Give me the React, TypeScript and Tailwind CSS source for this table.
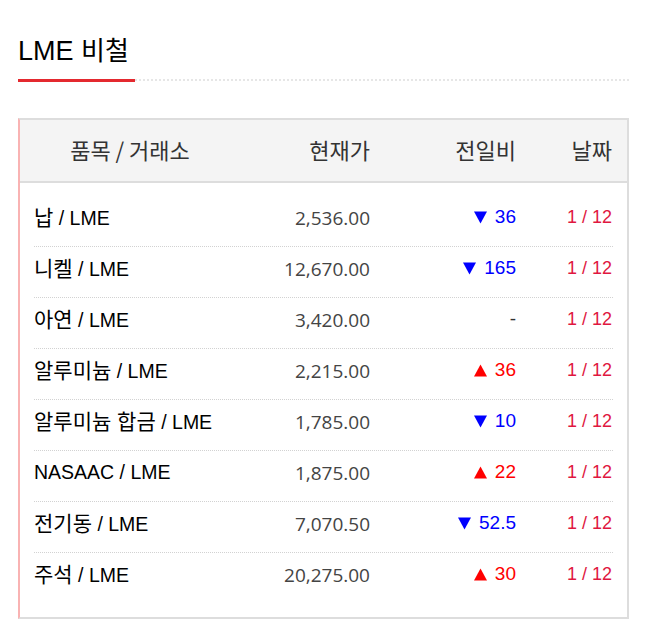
const rows = [
  { item: '납', market: 'LME', price: '2,536.00', dir: 'down', diff: '36', date: '1 / 12' },
  { item: '니켈', market: 'LME', price: '12,670.00', dir: 'down', diff: '165', date: '1 / 12' },
  { item: '아연', market: 'LME', price: '3,420.00', dir: 'none', diff: '-', date: '1 / 12' },
  { item: '알루미늄', market: 'LME', price: '2,215.00', dir: 'up', diff: '36', date: '1 / 12' },
  { item: '알루미늄 합금', market: 'LME', price: '1,785.00', dir: 'down', diff: '10', date: '1 / 12' },
  { item: 'NASAAC', market: 'LME', price: '1,875.00', dir: 'up', diff: '22', date: '1 / 12' },
  { item: '전기동', market: 'LME', price: '7,070.50', dir: 'down', diff: '52.5', date: '1 / 12' },
  { item: '주석', market: 'LME', price: '20,275.00', dir: 'up', diff: '30', date: '1 / 12' },
];

const sans = "font-['Liberation_Sans','Noto_Sans_CJK_KR',sans-serif]";
const kr = "font-['Noto_Sans_CJK_KR',sans-serif]";

const Arrow = ({ up }: { up: boolean }) => (
  <svg width="13" height="13" viewBox="0 0 13 13" className="mr-[8px] inline-block align-[-1px]">
    <path d={up ? 'M6.5 0.5L13 12.5H0Z' : 'M0 0.5H13L6.5 12.5Z'} fill="currentColor" />
  </svg>
);

export default function App() {
  return (
    <div className={`min-h-[644px] w-[665px] bg-white px-[18px] pt-[32px] ${sans}`}>
      <div className="flex w-[611px] items-start">
        <h2 className="w-[117px] whitespace-nowrap border-b-[3px] border-[#e4292f] pb-[9px] text-[27px] leading-[38px] font-normal text-black">
          LME <span className="text-[26px]">비철</span>
        </h2>
        <div className="mt-[47px] h-0 flex-1 border-b-2 border-dotted border-[#e6e6e6]" />
      </div>

      <div className="mt-[36px] w-[611px] border-2 border-l-[#f9b3b3] border-[#dddddd]">
        <div className={`flex h-[63px] items-center border-b-2 border-[#dddddd] bg-[#f4f4f4] px-[14px] pb-[2px] text-[22px] text-[#333] ${kr}`}>
          <div className="w-[192px] text-center">품목 / 거래소</div>
          <div className="w-[144px] text-right">현재가</div>
          <div className="w-[146px] text-right">전일비</div>
          <div className="w-[96px] text-right">날짜</div>
        </div>
        <ul className="px-[14px] py-[13px]">
          {rows.map((r, i) => (
            <li
              key={r.item}
              className={`flex h-[51px] items-start pt-[11px] leading-[20px] ${
                i < rows.length - 1 ? 'border-b border-dotted border-[#d2d2d2]' : ''
              }`}
            >
              <div className="w-[192px] whitespace-nowrap text-[19.5px] text-black">
                <span className={/[가-힣]/.test(r.item) ? 'text-[21px] leading-none' : ''}>{r.item}</span> / {r.market}
              </div>
              <div className="mt-[1px] w-[144px] text-right font-['Open_Sans',sans-serif] text-[19px] text-[#444]">{r.price}</div>
              <div
                className={`w-[146px] text-right text-[19px] ${
                  r.dir === 'down' ? 'text-[#0000ff]' : r.dir === 'up' ? 'text-[#ff0000]' : 'text-[#333]'
                }`}
              >
                {r.dir !== 'none' && <Arrow up={r.dir === 'up'} />}
                {r.diff}
              </div>
              <div className="w-[96px] text-right text-[18px] text-[#e0173f]">{r.date}</div>
            </li>
          ))}
        </ul>
      </div>
    </div>
  );
}
